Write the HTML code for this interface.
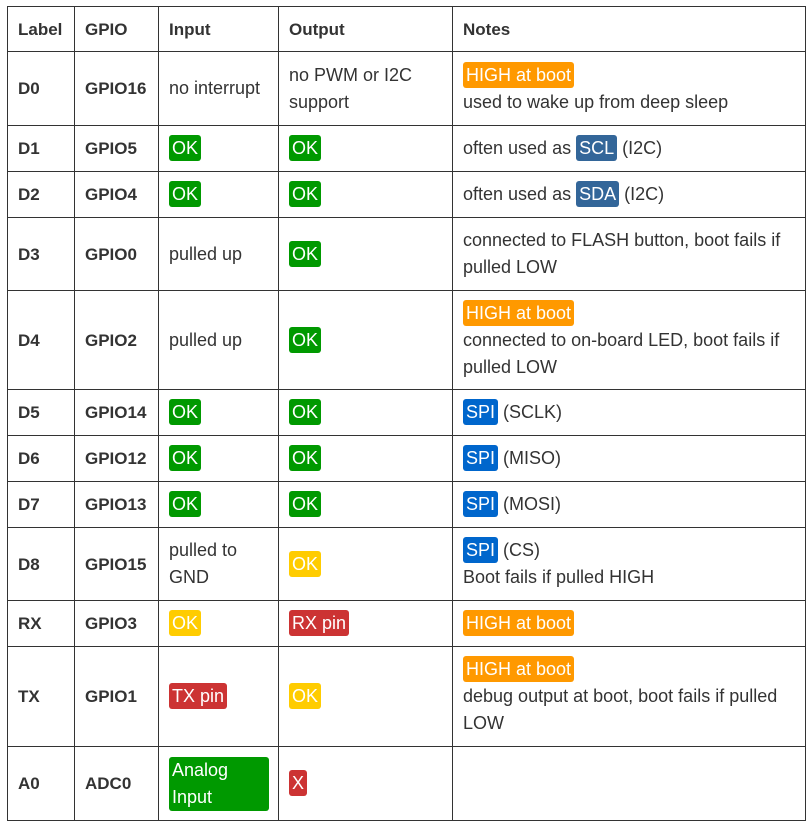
<!DOCTYPE html>
<html><head><style>
body{margin:0;background:#fff;font-family:"Liberation Sans",Arial,sans-serif;font-size:18px;color:#333;}
table{position:absolute;left:7px;top:6px;border-collapse:collapse;table-layout:fixed;width:798px;}
td,th{border:1px solid #333;padding:0 8px 0 10px;vertical-align:middle;line-height:27px;text-align:left;}
th{font-weight:bold;font-size:17px;}
td.b{font-weight:bold;font-size:17px;}
.g,.y,.r,.s,.p,.o{display:inline-block;color:#fff;border-radius:3px;padding:0 3px;line-height:26px;}
.g{background:#009900}.y{background:#ffcc00}.r{background:#cc3333}.s{background:#336699}.p{background:#0066cc}.o{background:#ff9900}
.ai{display:inline-block;background:#009900;color:#fff;border-radius:3px;padding:0 3px;box-sizing:border-box;width:100px;}
</style></head><body>
<table>
<colgroup><col style="width:67px"><col style="width:84px"><col style="width:120px"><col style="width:174px"><col style="width:353px"></colgroup>
<tr style="height:45px"><th>Label</th><th>GPIO</th><th>Input</th><th>Output</th><th>Notes</th></tr>
<tr style="height:74px"><td class="b">D0</td><td class="b">GPIO16</td><td>no interrupt</td><td>no PWM or I2C<br>support</td><td><span class="o">HIGH at boot</span><br>used to wake up from deep sleep</td></tr>
<tr style="height:46px"><td class="b">D1</td><td class="b">GPIO5</td><td><span class="g">OK</span></td><td><span class="g">OK</span></td><td>often used as <span class="s">SCL</span> (I2C)</td></tr>
<tr style="height:46px"><td class="b">D2</td><td class="b">GPIO4</td><td><span class="g">OK</span></td><td><span class="g">OK</span></td><td>often used as <span class="s">SDA</span> (I2C)</td></tr>
<tr style="height:73px"><td class="b">D3</td><td class="b">GPIO0</td><td>pulled up</td><td><span class="g">OK</span></td><td>connected to FLASH button, boot fails if<br>pulled LOW</td></tr>
<tr style="height:99px"><td class="b">D4</td><td class="b">GPIO2</td><td>pulled up</td><td><span class="g">OK</span></td><td><span class="o">HIGH at boot</span><br>connected to on-board LED, boot fails if<br>pulled LOW</td></tr>
<tr style="height:46px"><td class="b">D5</td><td class="b">GPIO14</td><td><span class="g">OK</span></td><td><span class="g">OK</span></td><td><span class="p">SPI</span> (SCLK)</td></tr>
<tr style="height:46px"><td class="b">D6</td><td class="b">GPIO12</td><td><span class="g">OK</span></td><td><span class="g">OK</span></td><td><span class="p">SPI</span> (MISO)</td></tr>
<tr style="height:46px"><td class="b">D7</td><td class="b">GPIO13</td><td><span class="g">OK</span></td><td><span class="g">OK</span></td><td><span class="p">SPI</span> (MOSI)</td></tr>
<tr style="height:73px"><td class="b">D8</td><td class="b">GPIO15</td><td>pulled to<br>GND</td><td><span class="y">OK</span></td><td><span class="p">SPI</span> (CS)<br>Boot fails if pulled HIGH</td></tr>
<tr style="height:46px"><td class="b">RX</td><td class="b">GPIO3</td><td><span class="y">OK</span></td><td><span class="r">RX pin</span></td><td><span class="o">HIGH at boot</span></td></tr>
<tr style="height:100px"><td class="b">TX</td><td class="b">GPIO1</td><td><span class="r">TX pin</span></td><td><span class="y">OK</span></td><td><span class="o">HIGH at boot</span><br>debug output at boot, boot fails if pulled<br>LOW</td></tr>
<tr style="height:74px"><td class="b">A0</td><td class="b">ADC0</td><td><span class="ai">Analog<br>Input</span></td><td><span class="r">X</span></td><td></td></tr>
</table>
</body></html>
